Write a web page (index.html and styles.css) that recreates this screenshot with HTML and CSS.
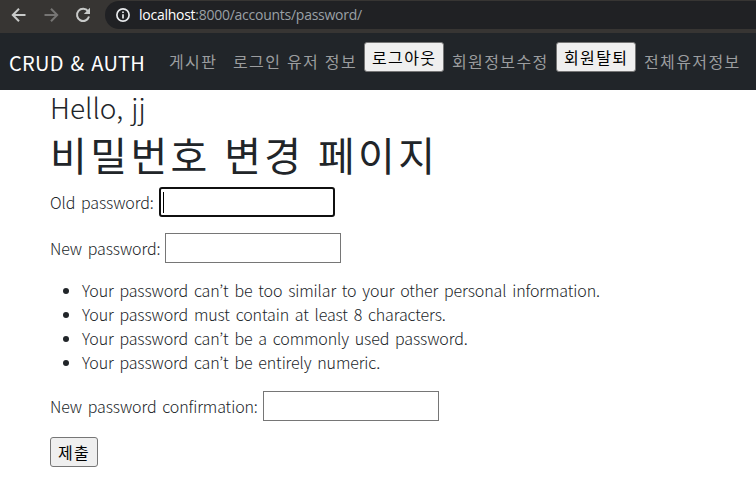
FILE: index.html
```html
<!DOCTYPE html>
<html lang="en">
<head>
<meta charset="utf-8">
<title>비밀번호 변경</title>
<link rel="stylesheet" href="styles.css">
</head>
<body>
<header class="toolbar">
  <svg class="tool" viewBox="0 0 16 16"><path d="M14.5 8H2M8 1.8 1.8 8 8 14.2"/></svg>
  <svg class="tool dim" viewBox="0 0 16 16"><path d="M1.5 8H14M8 1.8 14.2 8 8 14.2"/></svg>
  <svg class="tool" viewBox="0 0 16 16"><path d="M13 4.2A6.1 6.1 0 1 0 14 9.5"/><path class="solid" d="M15 .8V7H8.8z"/></svg>
  <div class="address">
    <svg class="info" viewBox="0 0 14 14"><circle cx="7" cy="7" r="6.1"/><path d="M7 6.2V10.4M7 3.5V5.1"/></svg>
    <span class="url"><span class="host">localhost</span>:8000/accounts/password/</span>
  </div>
</header>
<nav class="navbar">
  <a class="brand">CRUD &amp; AUTH</a>
  <a class="link board">게시판</a>
  <a class="link user">로그인 유저 정보</a>
  <button class="btn nav-btn">로그아웃</button>
  <a class="link edit">회원정보수정</a>
  <button class="btn nav-btn">회원탈퇴</button>
  <a class="link all">전체유저정보</a>
</nav>
<main class="page">
  <h3 class="hello">Hello, jj</h3>
  <h1 class="title">비밀번호 변경 페이지</h1>
  <form>
    <div class="row"><label class="old">Old password:</label><div class="field focused"><span class="caret"></span></div></div>
    <div class="row"><label class="new">New password:</label><div class="field"></div></div>
    <ul class="rules">
      <li>Your password can’t be too similar to your other personal information.</li>
      <li>Your password must contain at least 8 characters.</li>
      <li>Your password can’t be a commonly used password.</li>
      <li>Your password can’t be entirely numeric.</li>
    </ul>
    <div class="row"><label class="confirm">New password confirmation:</label><div class="field"></div></div>
    <button class="btn submit" type="button">제출</button>
  </form>
</main>
</body>
</html>
```
FILE: styles.css
```css
* { box-sizing: border-box; }
body {
  margin: 0;
  background: #fff;
  color: #212529;
  font: 16px/24px "Noto Sans CJK KR", sans-serif;
  font-weight: 400;
  font-feature-settings: "calt" 0;
  white-space: nowrap;
  overflow: hidden;
}
.toolbar {
  display: flex;
  align-items: center;
  height: 33px;
  padding: 0 0 3px 11px;
  background: #373533;
}
.tool {
  width: 16px;
  height: 16px;
  margin-right: 16px;
  fill: none;
  stroke: #c8cac9;
  stroke-width: 2;
}
.tool.dim { stroke: #767574; }
.tool .solid { fill: #c8cac9; stroke: none; }
.address {
  display: flex;
  align-items: center;
  flex: 1;
  height: 28px;
  margin-left: -2px;
  padding-left: 11px;
  border-radius: 14px 0 0 14px;
  background: #202124;
}
.info {
  width: 14px;
  height: 14px;
  margin-right: 9px;
  fill: none;
  stroke: #e8eaed;
  stroke-width: 1.7;
}
.url {
  color: #9aa0a6;
  font: 14px/20px "Open Sans", sans-serif;
  letter-spacing: -0.26px;
}
.host { color: #fff; }
.navbar {
  display: flex;
  align-items: center;
  height: 57px;
  padding-left: 9px;
  background: #212529;
}
.brand {
  width: 160px;
  padding-top: 2px;
  color: #fff;
  font-size: 20px;
  letter-spacing: 0.25px;
  word-spacing: 2.2px;
}
.link {
  padding-bottom: 1px;
  color: #9b9d9f;
  letter-spacing: 1.4px;
  word-spacing: 0.6px;
}
.board { width: 64px; }
.user { width: 131px; }
.edit { width: 104px; }
.btn {
  display: block;
  height: 30px;
  padding: 0 7px;
  border: 1px solid #767676;
  border-radius: 3px;
  background: #efefef;
  color: #000;
  font: inherit;
  line-height: 26px;
  letter-spacing: 1.4px;
}
.nav-btn {
  width: 80px;
  margin: 0 8px 10px 0;
}
.submit { width: 48px; }
.page { padding-left: 50px; }
.hello {
  margin: 0 0 8px;
  font-size: 28px;
  line-height: 34px;
  font-weight: 300;
  word-spacing: 2px;
}
.title {
  margin: -2px 0 9px;
  font-size: 40px;
  line-height: 48px;
  font-weight: 400;
  letter-spacing: 3.4px;
  word-spacing: 1px;
}
.row {
  display: flex;
  align-items: center;
  height: 30px;
  margin-bottom: 16px;
}
label, .rules {
  font-weight: 300;
  letter-spacing: -0.12px;
  word-spacing: 2.4px;
}
label { padding-bottom: 1px; }
.old { width: 109px; }
.new { width: 115px; }
.confirm { width: 213px; }
.field {
  width: 176px;
  height: 30px;
  border: 1px solid #767676;
  background: #fff;
}
.focused {
  padding: 3px 2px;
  border: 2px solid #101010;
  border-radius: 3px;
}
.caret {
  display: block;
  width: 1px;
  height: 21px;
  background: #000;
}
.rules {
  margin: -1px 0 17px;
  padding-left: 32px;
}
```
